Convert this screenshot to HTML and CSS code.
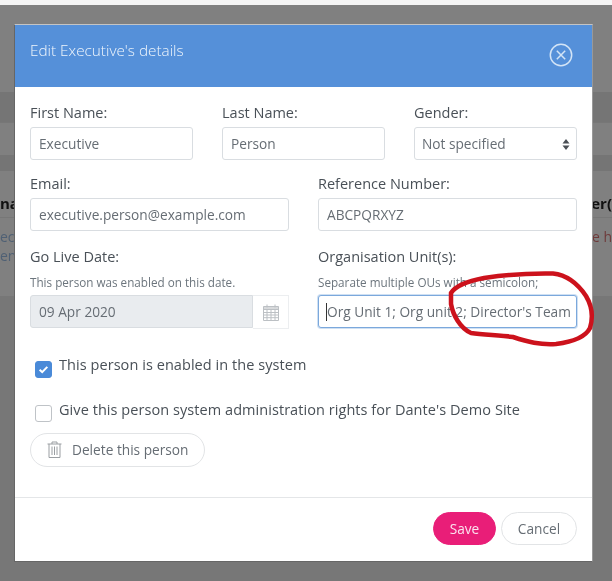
FILE: index.html
```html
<!DOCTYPE html>
<html lang="en">
<head>
    <meta charset="UTF-8">
    <meta name="viewport" content="width=device-width, initial-scale=1.0">
    <title>Edit Executive's details</title>
    <link rel="stylesheet" href="styles.css">
</head>
<body>
    <!-- Page behind the modal -->
    <div class="page">
        <div class="band band-top"></div>
        <div class="band band-head"></div>
        <div class="band band-plain"></div>
        <div class="band band-thin"></div>
        <div class="band band-titles"><b>na</b><b>er(</b></div>
        <div class="band band-rows">
            <div class="page-row"><span class="page-link">ec</span><span class="page-warn">ve h</span></div>
            <div class="page-row"><span class="page-link">en</span></div>
        </div>
    </div>

    <div class="modal">
        <div class="modal-header">
            <h2>Edit Executive's details</h2>
            <svg class="close-icon" width="24" height="24" viewBox="0 0 24 24">
                <circle cx="12" cy="12" r="10.7"/>
                <path d="M7.8 7.8L16.2 16.2M16.2 7.8L7.8 16.2"/>
            </svg>
        </div>

        <div class="modal-body">
            <div class="form-row thirds">
                <div class="form-group">
                    <label for="first-name">First Name:</label>
                    <input type="text" id="first-name" value="Executive">
                </div>
                <div class="form-group">
                    <label for="last-name">Last Name:</label>
                    <input type="text" id="last-name" value="Person">
                </div>
                <div class="form-group">
                    <label for="gender">Gender:</label>
                    <div class="select-wrap">
                        <select id="gender">
                            <option>Not specified</option>
                        </select>
                        <svg class="select-arrows" width="8" height="11" viewBox="0 0 8 11">
                            <path d="M4 0L7.5 4.4H0.5ZM4 11L0.5 6.6H7.5Z"/>
                        </svg>
                    </div>
                </div>
            </div>

            <div class="form-row halves row-email">
                <div class="form-group">
                    <label for="email">Email:</label>
                    <input type="email" id="email" value="executive.person@example.com">
                </div>
                <div class="form-group">
                    <label for="reference">Reference Number:</label>
                    <input type="text" id="reference" value="ABCPQRXYZ">
                </div>
            </div>

            <div class="form-row halves row-live">
                <div class="form-group">
                    <label for="go-live">Go Live Date:</label>
                    <p class="hint">This person was enabled on this date.</p>
                    <div class="input-group">
                        <input type="text" id="go-live" value="09 Apr 2020" disabled>
                        <span class="addon">
                            <svg width="16" height="17" viewBox="0 0 16 17">
                                <path class="cal-head" d="M0.5 2.5H15.5V5.5H0.5Z"/>
                                <path d="M0.5 2.5H15.5V16.5H0.5ZM0.5 5.5H15.5M0.5 8.5H15.5M0.5 11H15.5M0.5 13.7H15.5M4 5.5V16.5M8 5.5V16.5M12 5.5V16.5M4 0.5V3.5M12 0.5V3.5"/>
                            </svg>
                        </span>
                    </div>
                </div>
                <div class="form-group">
                    <label for="units">Organisation Unit(s):</label>
                    <p class="hint">Separate multiple OUs with a semicolon;</p>
                    <div class="caret-wrap">
                        <input type="text" id="units" class="focused" value="Org Unit 1; Org unit 2; Director's Team">
                        <span class="caret"></span>
                    </div>
                </div>
            </div>

            <div class="check-row row-enabled">
                <span class="check checked">
                    <svg width="11" height="9" viewBox="0 0 11 9">
                        <path d="M1.6 4.8L4.2 7.1L9.3 1.9"/>
                    </svg>
                </span>
                <span>This person is enabled in the system</span>
            </div>
            <div class="check-row row-admin">
                <span class="check"></span>
                <span>Give this person system administration rights for Dante's Demo Site</span>
            </div>

            <button type="button" class="btn btn-delete">
                <svg width="15" height="17" viewBox="0 0 15 17">
                    <path d="M0.5 3H14.5M5 3V1H10V3M2 3V16.5H13V3M5 5.500V14M7.500 5.500V14M10 5.500V14"/>
                </svg>
                Delete this person
            </button>
        </div>

        <div class="modal-footer">
            <button type="button" class="btn btn-save">Save</button>
            <button type="button" class="btn btn-cancel">Cancel</button>
        </div>
    </div>

    <!-- Red pen mark drawn over the screenshot -->
    <svg class="scribble" width="612" height="581" viewBox="0 0 612 581">
        <path d="M451 293C456 285 468 281 484 278C505 275 530 273 553 273.500C567 275 578 284 586 296C592 306 593 318 590 328C585 338 572 342 556 344C540 345 528 342 513 337C500 335 484 335 471 333C460 328 453 315 451 304Z"/>
    </svg>
</body>
</html>
```

FILE: styles.css
```css
* {
    box-sizing: border-box;
}
body {
    font-family: 'Open Sans', 'Noto Sans', sans-serif;
    font-size: 14.500px;
    margin: 0;
    height: 581px;
    overflow: hidden;
    background-color: #777;
    color: #495057;
    /* the reference is a resized screenshot, so everything is a little soft */
    filter: blur(0.35px);
}
.band {
    border-bottom: 1px solid #777;
}
.band-top {
    height: 92px;
    border-bottom: none;
    border-top: 5px solid #f4f4f4;
    background-color: #808080;
}
.band-head {
    height: 31px;
    background-color: #757575;
}
.band-plain {
    height: 32px;
    border-bottom: none;
    background-color: #808080;
}
.band-thin {
    height: 16px;
    border-bottom: none;
    background-color: #757575;
}
.band-titles {
    display: flex;
    justify-content: space-between;
    align-items: flex-end;
    height: 47px;
    padding-bottom: 4px;
    background-color: #808080;
    color: #111;
    font-size: 15px;
}
.band-rows {
    height: 79px;
    padding-top: 9px;
    background-color: #808080;
}
.page-row {
    display: flex;
    justify-content: space-between;
    height: 19px;
    font-size: 14px;
    line-height: 19px;
}
.page-link {
    color: #4f6074;
}
.page-warn {
    color: #6e3a3a;
}
.modal {
    position: absolute;
    left: 14px;
    top: 24px;
    width: 579px;
    height: 538px;
    border: 1px solid #666;
    border-top-color: #c4c4c4;
    border-right-color: #999;
    background-color: white;
}
.modal-header {
    display: flex;
    justify-content: space-between;
    height: 62px;
    padding: 13px 19px 0 15px;
    background-color: #5590d9;
}
.modal-header h2 {
    margin: 0;
    font-size: 15.300px;
    font-weight: 300;
    line-height: 24px;
    color: #f0f6fc;
}
.close-icon {
    margin-top: 5px;
    fill: none;
    stroke: #d3e4f6;
    stroke-width: 1.500;
}
.modal-body {
    height: 410px;
    padding: 16px 15px 0;
}
.form-row {
    display: grid;
}
.thirds {
    grid-template-columns: 163px 163px 163px;
    column-gap: 29px;
}
.halves {
    grid-template-columns: 259px 259px;
    column-gap: 29px;
}
.row-email {
    margin-top: 14px;
}
.row-live {
    margin-top: 16px;
}
label {
    display: block;
    height: 20px;
    margin-bottom: 4px;
    line-height: 20px;
}
.hint {
    height: 18px;
    margin: 6px 0 4px;
    font-size: 11.700px;
    line-height: 18px;
    color: #6c757d;
}
input, select {
    display: block;
    width: 100%;
    height: 33px;
    padding: 0 8px;
    border: 1px solid #d9dde1;
    border-radius: 3px;
    background-color: white;
    font-family: inherit;
    font-size: 13.700px;
    color: #666d74;
}
select {
    appearance: none;
    padding-left: 7px;
}
.select-wrap, .caret-wrap {
    position: relative;
}
.select-arrows {
    position: absolute;
    right: 7px;
    top: 12px;
    fill: #4a4f55;
}
.input-group {
    display: flex;
}
.input-group input {
    flex: 1;
    min-width: 0;
    border-radius: 3px 0 0 3px;
    background-color: #e9ecef;
}
.addon {
    display: flex;
    align-items: center;
    justify-content: center;
    width: 36px;
    height: 34px;
    border: 1px solid #eceef0;
    border-left: none;
}
.addon svg {
    fill: none;
    stroke: #bcc0c4;
    stroke-width: 1;
}
.addon .cal-head {
    fill: #d8dadc;
    stroke: none;
}
.focused {
    padding-right: 1px;
    border-color: #7ba8dc;
    box-shadow: 0 0 0 1px #cfe0f3;
}
.caret {
    position: absolute;
    left: 8px;
    top: 8px;
    width: 1px;
    height: 18px;
    background-color: #333;
}
.check-row {
    display: flex;
    gap: 7px;
    height: 20px;
    padding-left: 5px;
    line-height: 20px;
    letter-spacing: 0.06px;
}
.row-enabled {
    margin-top: 26px;
}
.row-admin {
    margin-top: 25px;
}
.check {
    display: flex;
    align-items: center;
    justify-content: center;
    flex: none;
    width: 17px;
    height: 17px;
    margin-top: 5px;
    border: 1px solid #bfc3c7;
    border-radius: 3px;
}
.check.checked {
    margin-top: 6px;
    border-color: #4a8ad8;
    background-color: #4a8ad8;
}
.check svg {
    fill: none;
    stroke: white;
    stroke-width: 2;
}
.btn {
    height: 33px;
    padding: 0;
    border: 1px solid #e2e4e6;
    border-radius: 17px;
    background-color: white;
    font-family: inherit;
    font-size: 13.700px;
    color: #666d74;
}
.btn-delete {
    display: flex;
    align-items: center;
    gap: 10px;
    width: 175px;
    height: 34px;
    margin-top: 13px;
    padding-left: 16px;
    padding-bottom: 2px;
}
.btn-delete svg {
    fill: none;
    stroke: #9a9ea2;
    stroke-width: 1;
}
.modal-footer {
    display: flex;
    justify-content: flex-end;
    gap: 5px;
    height: 64px;
    padding: 14px 15px 0;
    border-top: 1px solid #e4e6e8;
}
.btn-save {
    width: 63px;
    border-color: #e91e78;
    background-color: #e91e78;
    color: #fbe3ee;
}
.btn-cancel {
    width: 76px;
}
.scribble {
    position: absolute;
    left: 0;
    top: 0;
    fill: none;
    stroke: #cc121c;
    stroke-width: 4.500;
    stroke-linejoin: round;
}
```
